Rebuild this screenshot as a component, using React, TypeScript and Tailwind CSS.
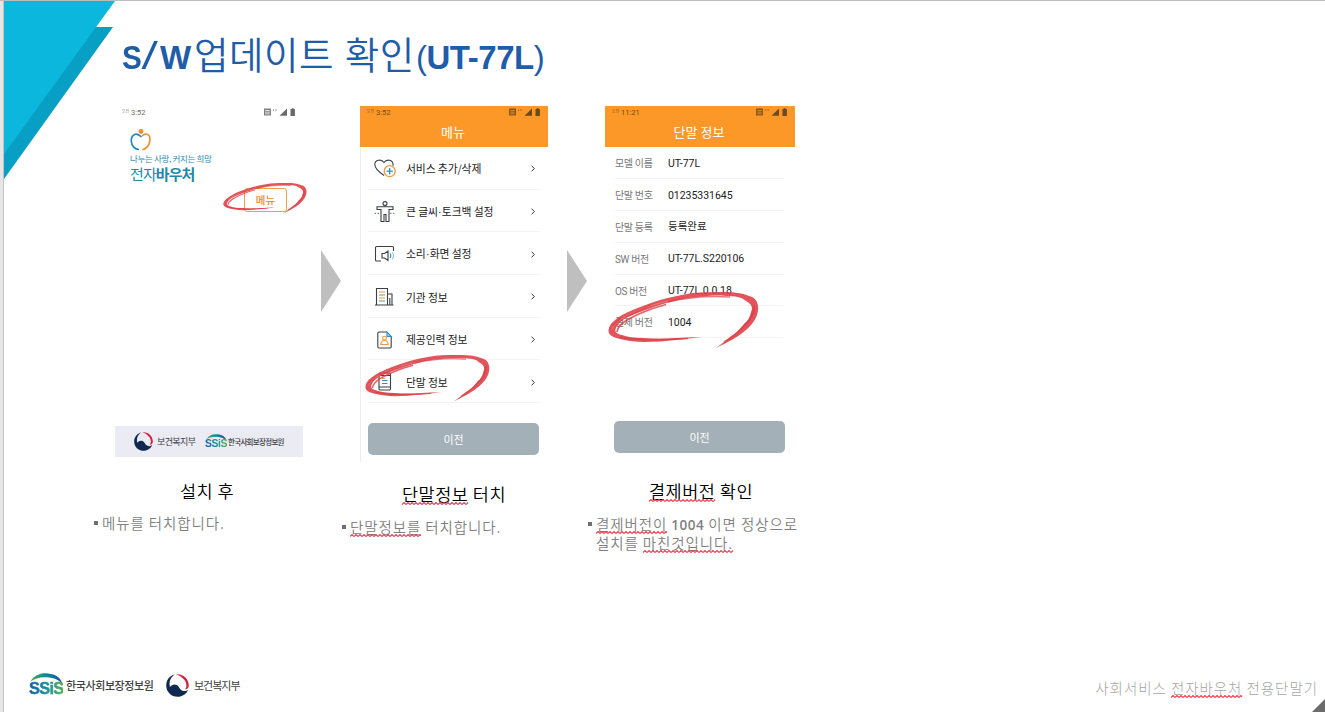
import type { ReactNode } from 'react';

const KR = "font-['Noto_Sans_CJK_KR',sans-serif]";
const UI = "font-['Roboto','Noto_Sans_CJK_KR',sans-serif]";

function BrushCircle({ className }: { className: string }) {
  return (
    <svg className={className} viewBox="0 0 151 57" preserveAspectRatio="none" aria-hidden="true">
      <path
        fill="#dc3c43"
        fillOpacity="0.88"
        d="M108 56 C120 50 130 45 138 38 C147 30 151 22 150 14 C149 8 146 5 141 4 C134 1 126 0 117 0 C106 0 96 0 85 1 C73 3 62 5 52 8 C40 12 28 16 18 21 C9 26 3 30 1 36 C-1 42 3 45 12 47 C20 49 28 50 36 50 C48 50 58 49 68 48 C77 47 86 46 93 45 C84 45 76 46 68 46 C56 47 45 47 35 46 C26 46 19 45 14 43 C9 42 6 40 8 36 C10 31 14 28 20 25 C31 20 42 16 55 12 C66 9 77 6 88 5 C99 4 109 3 118 4 C127 4 134 5 138 9 C144 12 145 16 143 20 C142 25 140 29 136 32 C131 38 128 41 122 45 C118 49 113 52 108 56Z"
      />
      <path fill="none" stroke="#dc3c43" strokeOpacity="0.8" strokeWidth="1.800" d="M9 40 C10 32 20 27 32 21.500 C40 18 48 15 58 12.500 M5 34 C12 26 27 20 43 13 M137 33 C143 28 146 20 146 14" />
      <path fill="none" stroke="#dc3c43" strokeOpacity="0.7" strokeWidth="1.500" d="M60 10 C80 5 100 3.500 122 5 M12 45 C25 48 45 48.500 80 46.500 M138 31 C134 38 126 44 116 50" />
      <path fill="none" stroke="#fff" strokeOpacity="0.35" strokeWidth="0.600" d="M13 27 C27 18 43 13 60 9 M4 37 C6 32 11 28 18 25" />
    </svg>
  );
}

function Taegeuk({ className }: { className: string }) {
  return (
    <svg className={className} viewBox="0 0 24 24" aria-hidden="true">
      <path fill="#102a4f" d="M9 .6C4 1.800 .2 6.200 .2 12c0 6.600 5.300 11.800 11.800 11.800 5.200 0 9.500-3.200 11.200-7.600-1.600 1.700-4.300 2.200-6.600 1-2.700-1.400-2.800-4.300-5.300-5.600-2.400-1.200-5.600-.3-7.100 2C2.800 8.800 4.600 3.600 9 .6Z" />
      <path fill="#d0243a" d="M10.500 .3c7-1 13.300 4.500 13.300 11.700 0 2.500-1.700 4.200-4 4 2.100-1.600 2-6.800-.8-10C16.700 3.300 14 1.400 10.500 .3Z" />
    </svg>
  );
}

function Ssis({ small = false }: { small?: boolean }) {
  return (
    <span className={small ? 'relative mb-[2px] block h-[14px] w-[23px] shrink-0' : 'relative mb-[3px] block h-[22px] w-[35px] shrink-0'}>
      <svg className="absolute inset-0 h-full w-full" viewBox="0 0 35 22" aria-hidden="true">
        <defs>
          <linearGradient id="ssisArc" x1="0" x2="1">
            <stop offset="0" stopColor="#5aaa46" />
            <stop offset=".45" stopColor="#0c8f9b" />
            <stop offset="1" stopColor="#14539c" />
          </linearGradient>
        </defs>
        <path fill="url(#ssisArc)" d="M1.500 8.500C5 2 12-.5 19 .4 27 1 32 5 33.500 11 30 7 25 4.600 18 4.200 11 3.800 6 5.500 1.500 8.500Z" />
      </svg>
      <span
        className={
          small
            ? "absolute bottom-0 left-0 bg-linear-to-r from-[#1a5ba8] via-[#138f9c] to-[#58ae45] bg-clip-text font-['Liberation_Sans',sans-serif] text-[10.500px] leading-[10px] font-bold tracking-[-0.5px] text-transparent"
            : "absolute bottom-0 left-0 bg-linear-to-r from-[#1a5ba8] via-[#138f9c] to-[#58ae45] bg-clip-text font-['Liberation_Sans',sans-serif] text-[16.500px] leading-[14px] font-bold tracking-[-0.8px] text-transparent [-webkit-text-stroke:0.4px_#1c86a044]"
        }
      >
        SSiS
      </span>
    </span>
  );
}

function StatusBar({ time, color }: { time: string; color: string }) {
  return (
    <div className={`flex h-[12px] items-center pr-[7px] pl-[7px] ${UI} ${color}`}>
      <span className="w-[9px] text-[4px] leading-none opacity-70">오전</span>
      <span className="pt-px text-[7.500px] leading-none">{time}</span>
      <svg className="ml-auto h-[8px] w-[32px]" viewBox="0 0 32 8" fill="currentColor" aria-hidden="true">
        <path fillRule="evenodd" d="M0 .5h7v7H0zM1.200 2v.8h4.600V2zM1.200 3.800v.7h4.600v-.7zM1.200 5.500v.8h4.600v-.8z" opacity=".85" />
        <path d="M9 1.500h1v1.500H9zM11 1.500h2v.6h-2zM11 2.500h2v.5h-2z" opacity=".6" />
        <path d="M23 .5v7.300h-7.500z" />
        <path d="M27.800 .2h1.800v.7h1.300v7h-4.400v-7h1.300z" />
      </svg>
    </div>
  );
}

function Phone({ title, time, children }: { title: string; time: string; children: ReactNode }) {
  return (
    <div>
      <div className="h-[41px] bg-[#fc9827]">
        <StatusBar time={time} color="text-[#6b4a22]" />
        <div className={`pt-[7px] pr-[2px] text-center text-[13px] leading-[14px] text-white ${KR}`}>{title}</div>
      </div>
      {children}
    </div>
  );
}

const svgProps = {
  className: 'h-[22px] w-[22px] shrink-0',
  viewBox: '0 0 22 22',
  fill: 'none',
  stroke: '#3c3f48',
  strokeWidth: 1.1,
  'aria-hidden': true,
} as const;

const HeartIcon = () => (
  <svg {...svgProps}>
    <path d="M10 17.500C5 14 .8 10.500 .8 6.500.8 1.500 7.500.8 10 4.500 12.500.8 19 1.500 19 6.500v1.300" />
    <circle cx="15.700" cy="13.200" r="5.500" stroke="#f0983c" strokeWidth="1.300" />
    <path stroke="#2592c9" strokeWidth="1.300" d="M15.700 10v6.400M12.500 13.200h6.400" />
  </svg>
);
const BodyIcon = () => (
  <svg {...svgProps}>
    <circle cx="11" cy="2.600" r="2" />
    <path d="M3 5.800h16v2.700h-4v12h-3v-7h-2v7H7v-12H3z" />
    <path strokeDasharray="1.500 1.500" strokeWidth=".8" d="M.5 12.300H6M16 12.300h5.500" />
  </svg>
);
const SoundIcon = () => (
  <svg {...svgProps}>
    <path d="M7 18H2.500a1 1 0 0 1-1-1V4.500a1 1 0 0 1 1-1h16a1 1 0 0 1 1 1V8" />
    <path d="M8 10.500h2.500L14 8v9.500L10.500 15H8z" />
    <path stroke="#2592c9" d="M16 10.500q1.600 2.200 0 4.500" />
    <path stroke="#2592c9" d="M18 9q3 3.700 0 7.500" opacity=".5" />
  </svg>
);
const BuildingIcon = () => (
  <svg {...svgProps}>
    <path d="M2.500 19V2.500h11V19M13.500 8H18v11M1 19h18.500M15.800 12v7" />
    <path stroke="#f0983c" d="M5 6h6M5 12h6" />
    <path stroke="#5f9f83" d="M5 9h6M5 15h6" />
  </svg>
);
const PersonDocIcon = () => (
  <svg {...svgProps}>
    <path d="M13 3H5a1.200 1.200 0 0 0-1.200 1.200v13.600A1.200 1.200 0 0 0 5 19h11a1.200 1.200 0 0 0 1.200-1.200V7.500" />
    <path stroke="#2592c9" fill="#a6d4ed" d="M13 3v4.500h4.300z" />
    <g stroke="#f0983c">
      <circle cx="10.500" cy="9.200" r="1.900" />
      <path d="M6.800 15.500c.2-2.700 1.500-4 3.700-4s3.500 1.300 3.700 4z" />
    </g>
  </svg>
);
const DeviceIcon = () => (
  <svg {...svgProps}>
    <rect x="5" y="2" width="11.500" height="17" rx="1.300" />
    <path d="M5 4.500h11.500M5 16h11.500" />
    <path stroke="#2592c9" d="M8 9.500h5.500M8 12.500h5.500" />
    <path stroke="#f0983c" d="M8 7.500h3" />
  </svg>
);

const menu = [
  { label: '서비스 추가/삭제', Icon: HeartIcon },
  { label: '큰 글씨·토크백 설정', Icon: BodyIcon },
  { label: '소리·화면 설정', Icon: SoundIcon },
  { label: '기관 정보', Icon: BuildingIcon },
  { label: '제공인력 정보', Icon: PersonDocIcon },
  { label: '단말 정보', Icon: DeviceIcon },
];

const info = [
  ['모델 이름', 'UT-77L'],
  ['단말 번호', '01235331645'],
  ['단말 등록', '등록완료'],
  ['SW 버전', 'UT-77L.S220106'],
  ['OS 버전', 'UT-77L.0.0.18'],
  ['결제 버전', '1004'],
];

function MenuLabel({ text }: { text: string }) {
  return (
    <span className={`ml-[10px] flex text-[10.800px] leading-none tracking-[-0.100px] whitespace-pre text-[#222] ${KR}`}>
      {text.split('·').map((part, i) => (
        <span key={part}>
          {i > 0 && <span className="inline-block w-[4px] text-center font-['Liberation_Sans',sans-serif]">·</span>}
          {part}
        </span>
      ))}
    </span>
  );
}

function Misspelled({ children }: { children: ReactNode }) {
  return (
    <span className="relative inline-block">
      {children}
      <svg className="absolute -bottom-px left-0 h-[3px] w-full" aria-hidden="true">
        <defs>
          <pattern id="squiggle" width="4" height="3" patternUnits="userSpaceOnUse">
            <path d="M0 2.500L2 .5 4 2.500" fill="none" stroke="#ee3a4c" strokeWidth="1.100" />
          </pattern>
        </defs>
        <rect width="100%" height="3" fill="url(#squiggle)" />
      </svg>
    </span>
  );
}

function Heading({ children }: { children: ReactNode }) {
  return <h2 className={`text-center text-[17.500px] leading-[20px] font-[350] tracking-[0.500px] whitespace-nowrap text-black ${KR}`}>{children}</h2>;
}

function Bullet({ children }: { children: ReactNode }) {
  return (
    <div className={`flex text-[14.500px] leading-[18px] font-[350] tracking-[0.900px] whitespace-nowrap text-[#7f7f7f] ${KR}`}>
      <span className="mt-[7px] mr-[4px] h-[4px] w-[4px] shrink-0 bg-[#6f6f6f]" />
      <p>{children}</p>
    </div>
  );
}

function Arrow() {
  return (
    <svg className="mt-[144px] h-[62px] w-[20px] shrink-0" viewBox="0 0 20 62" aria-hidden="true">
      <path fill="#bfbfbf" d="M0 0L20 31 0 62z" />
    </svg>
  );
}

function BackButton() {
  return (
    <div className={`flex h-[32px] w-[171px] items-center justify-center rounded-[5px] bg-[#a3b0b8] text-[11px] leading-none text-white ${KR}`}>
      이전
    </div>
  );
}

export default function App() {
  return (
    <div className="relative flex h-[712px] w-[1325px] flex-col overflow-hidden border-t border-[#bdbdbd] bg-white">
      <div className="absolute inset-y-0 left-0 w-[4px] border-r border-[#c4c4c4] bg-[#e6e6e6]" />
      <svg className="absolute top-0 left-[4px] h-[180px] w-[112px]" viewBox="0 0 112 180" aria-hidden="true">
        <path fill="#079fc3" d="M90 26h19L0 178V140z" />
        <path fill="#0cb7de" d="M0 0h111L0 153z" />
      </svg>

      <header className="flex h-[105px] shrink-0 items-start pt-[28px] pl-[122px] text-[#1f5da8]">
        <h1 className="flex items-baseline leading-[48px] whitespace-nowrap">
          <span className="w-[19px] font-['Liberation_Sans',sans-serif] text-[33px] font-bold">
            <span className="inline-block origin-left scale-x-90">S</span>
          </span>
          <span className="w-[19px] font-['Open_Sans',sans-serif] text-[38px] font-normal">
            <span className="inline-block origin-left scale-x-125">/</span>
          </span>
          <span className="w-[34px] font-['Liberation_Sans',sans-serif] text-[33px] font-bold">W</span>
          <span className={`text-[37.500px] font-[350] tracking-[0.500px] ${KR}`}>
            업데이트<span className="ml-[2px]"> 확인</span>
          </span>
          <span className="ml-px font-['Liberation_Sans',sans-serif] text-[33px] font-bold tracking-[-0.450px]">
            <span className="font-normal">(</span>UT-77L<span className="font-normal">)</span>
          </span>
        </h1>
      </header>

      <main className="flex flex-1 items-start pl-[94px]">
        <section className="w-[227px]">
          <div className="ml-[21px] flex h-[351px] w-[188px] flex-col">
            <StatusBar time="3:52" color="text-[#6a6a6a]" />
            <div className="pt-[10px] pl-[15px]">
              <svg className="h-[23px] w-[21px]" viewBox="0 0 21 23" fill="none" aria-hidden="true">
                <circle cx="11" cy="3.500" r="2.400" fill="#f28c28" />
                <path stroke="#1c87bd" strokeWidth="1.600" d="M11.500 9C9 6.500 6.500 5.500 4.500 6.500 2 7.700 1.200 10.500 1.300 13c.2 5 3.500 8.500 7.700 8.500" />
                <path stroke="#f28c28" strokeWidth="1.600" d="M12 8c2-1.800 4.400-2.400 6-1.300 2 1.300 2.200 4 1.800 6.300-.8 4.300-3.700 7.800-7.300 8.700" />
              </svg>
              <div className={`text-[8.500px] leading-[15px] tracking-[-0.350px] whitespace-nowrap text-[#2b8db5] ${KR}`}>나누는 사랑, 커지는 희망</div>
              <div className={`text-[15px] leading-[16px] tracking-[-0.900px] whitespace-nowrap text-[#2288a8] ${KR}`}>
                전자<b>바우처</b>
              </div>
            </div>
            <div className="relative mt-[6px] ml-[129px] flex h-[24px] w-[43px] items-center justify-center rounded-[3px] border border-[#f0a04b]">
              <span className={`text-[10.500px] leading-none font-medium text-[#f28c28] ${KR}`}>메뉴</span>
              <BrushCircle className="absolute top-[-6px] left-[-22px] h-[31px] w-[84px]" />
            </div>
            <div className="mt-auto flex h-[31px] items-center bg-[#eaebf3] pl-[19px]">
              <Taegeuk className="h-[19px] w-[19px] shrink-0" />
              <span className={`ml-[4px] w-[48px] text-[9px] leading-none tracking-[-0.600px] whitespace-nowrap text-[#3d3d46] ${KR}`}>보건복지부</span>
              <Ssis small />
              <span className={`w-[57px] text-[7.500px] leading-none font-medium tracking-[-0.700px] whitespace-nowrap text-[#3d3d46] ${KR}`}>한국사회보장정보원</span>
            </div>
          </div>
          <div className="mt-[24px] ml-[19px] w-[188px]"><Heading>설치 후</Heading></div>
          <div className="mt-[13px]"><Bullet>메뉴를 터치합니다.</Bullet></div>
        </section>

        <Arrow />

        <section className="w-[226px]">
          <div className="ml-[19px] h-[356px] w-[188px]">
            <Phone title="메뉴" time="3:52">
              <div className="h-[315px] border-l border-[#ededed] pl-[7px]">
                <ul className="w-[172px]">
                  {menu.map(({ label, Icon }) => (
                    <li key={label} className="relative flex h-[42.700px] items-center border-b border-[#f3f3f3] pt-[2px] pl-[6px]">
                      <Icon />
                      <MenuLabel text={label} />
                      <svg className="mr-[5px] ml-auto h-[7px] w-[4px]" viewBox="0 0 4 7" fill="none" stroke="#333" strokeWidth="1" aria-hidden="true">
                        <path d="M.6 .7L3.300 3.500.6 6.300" />
                      </svg>
                      {label === '단말 정보' && <BrushCircle className="absolute top-[-5px] left-[-3px] h-[47px] w-[125px]" />}
                    </li>
                  ))}
                </ul>
                <div className="mt-[20px]"><BackButton /></div>
              </div>
            </Phone>
          </div>
          <div className="mt-[22px] ml-[19px] w-[188px]"><Heading><Misspelled>단말정보</Misspelled> 터치</Heading></div>
          <div className="mt-[14px] ml-px"><Bullet><Misspelled>단말정보를</Misspelled> 터치합니다.</Bullet></div>
        </section>

        <Arrow />

        <section className="w-[222px]">
          <div className="ml-[18px] h-[351px] w-[190px]">
            <Phone title="단말 정보" time="11:21">
              <dl className="mr-[12px] ml-[10px]">
                {info.map(([k, v], i) => (
                  <div key={k} className="relative flex h-[31.900px] items-center border-b border-[#f3f3f3] pt-[3px]">
                    <dt className={`w-[53px] text-[10px] leading-none tracking-[-0.350px] whitespace-nowrap text-[#777] ${UI}`}>{k}</dt>
                    <dd className={`text-[10.500px] leading-none tracking-[-0.030px] whitespace-nowrap text-[#222] ${UI}`}>{v}</dd>
                    {i === 5 && <BrushCircle className="absolute top-[-14px] left-[-7px] h-[57px] w-[151px]" />}
                  </div>
                ))}
              </dl>
              <div className="mt-[83px] ml-[9px]"><BackButton /></div>
            </Phone>
          </div>
          <div className="mt-[24px] ml-[20px] w-[188px]"><Heading><Misspelled>결제버전</Misspelled> 확인</Heading></div>
          <div className="mt-[14px] ml-px">
            <Bullet>
              <Misspelled>결제버전이</Misspelled> <b className="font-['Open_Sans',sans-serif] text-[13.500px] font-semibold tracking-[0.500px]">1004</b> 이면 정상으로
              <br />
              설치를 <Misspelled>마친것입니다.</Misspelled>
            </Bullet>
          </div>
        </section>
      </main>

      <footer className="flex h-[50px] shrink-0 items-start pr-[7px] pl-[29px]">
        <div className="flex items-center pt-[11px]">
          <Ssis />
          <span className={`ml-[2px] w-[100px] text-[11px] leading-none font-medium tracking-[-0.400px] whitespace-nowrap text-[#404040] ${KR}`}>한국사회보장정보원</span>
          <Taegeuk className="h-[23px] w-[23px]" />
          <span className={`ml-[5px] text-[11px] leading-none tracking-[-1px] whitespace-nowrap text-[#404040] ${KR}`}>보건복지부</span>
        </div>
        <p className={`mt-[17px] ml-auto text-[14.500px] leading-[18px] font-light tracking-[0.950px] whitespace-nowrap text-[#a6a6a6] ${KR}`}>
          사회서비스 <Misspelled>전자바우처</Misspelled> 전용단말기
        </p>
      </footer>
      <svg className="absolute right-0 bottom-0 h-[13px] w-[13px]" viewBox="0 0 13 13" aria-hidden="true">
        <path fill="#6b6b6b" d="M13 0v13H0z" />
      </svg>
    </div>
  );
}
